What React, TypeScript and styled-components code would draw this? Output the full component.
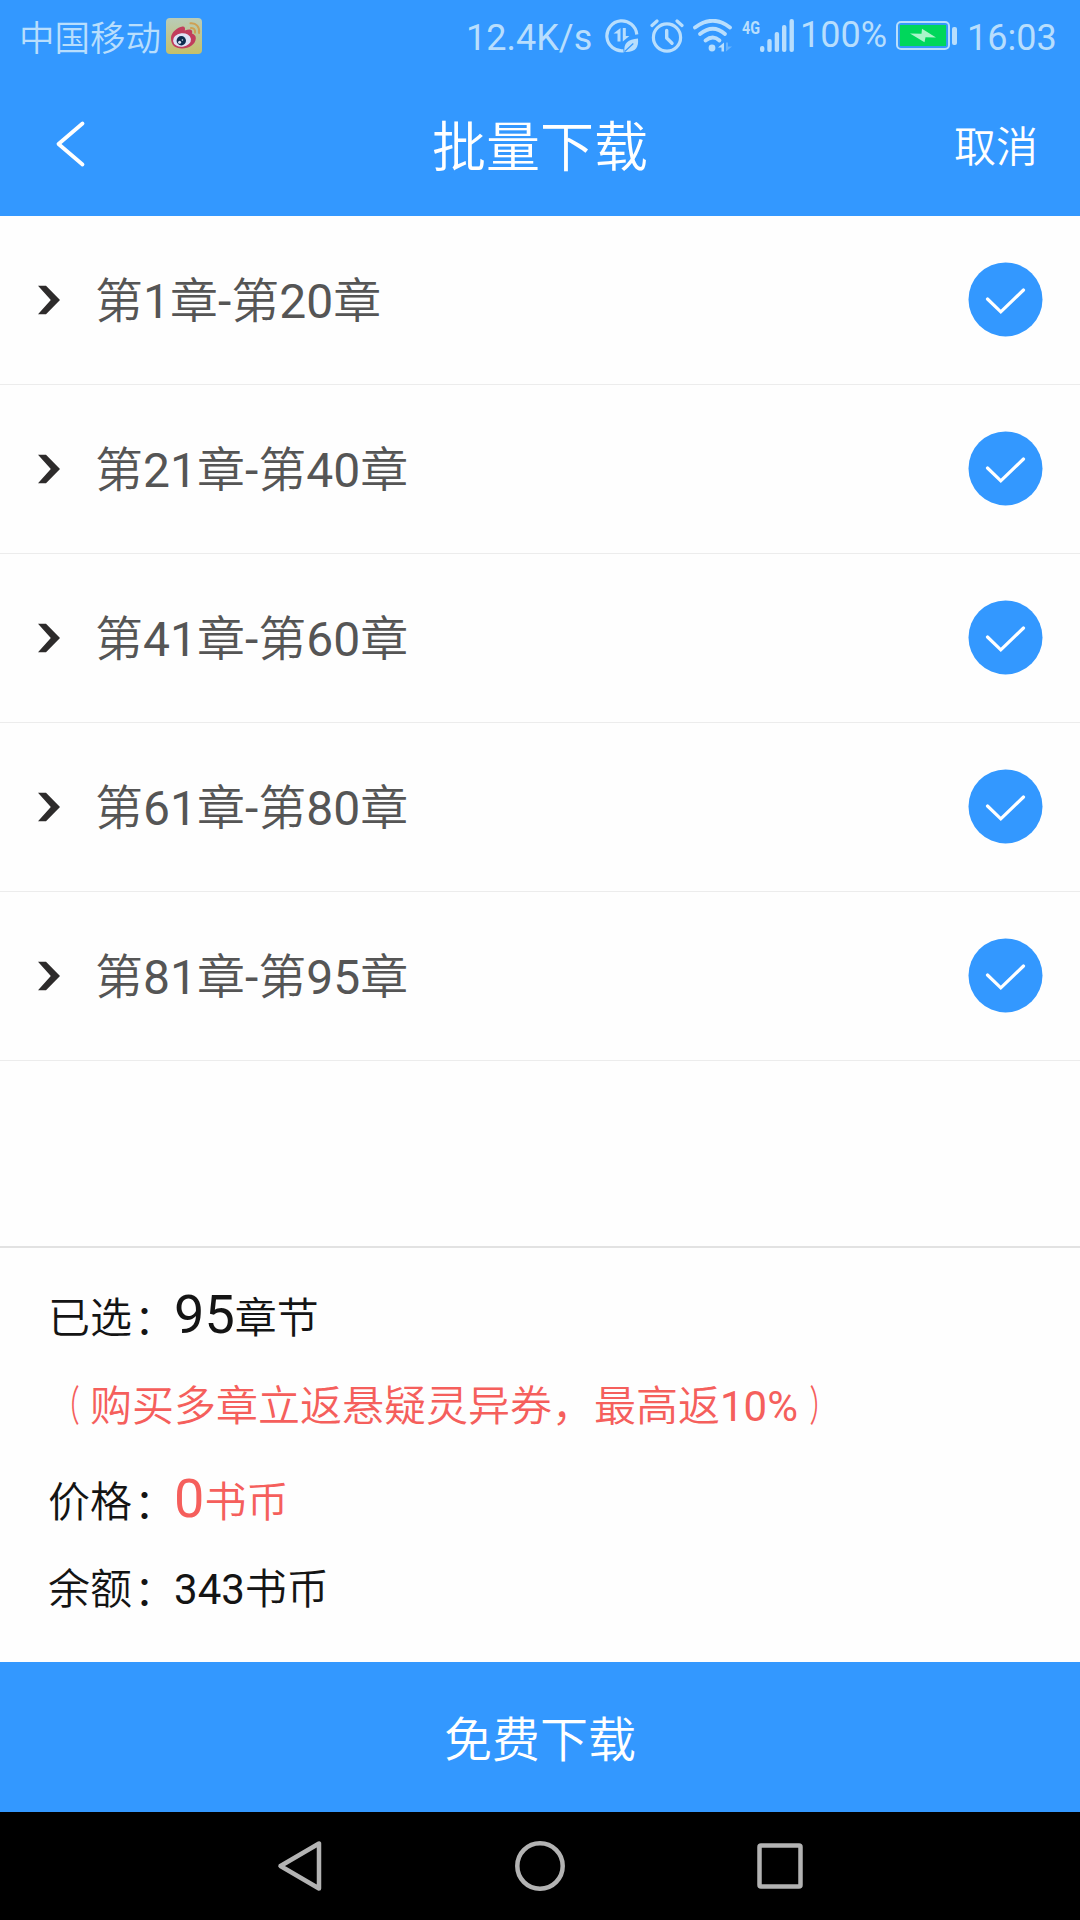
import React, { useState } from 'react';
import styled, { createGlobalStyle } from 'styled-components';

const BLUE = '#3398ff';
const STATUS = '#b8defd';
const RED = '#f55f5c';

const GlobalStyle = createGlobalStyle`
  html, body { margin: 0; padding: 0; background: #fff; }
  * { box-sizing: border-box; }
  button { font: inherit; color: inherit; border: 0; padding: 0; background: none; cursor: pointer; }
  svg { display: block; flex: none; }
`;

const Screen = styled.div`
  width: 1080px;
  height: 1920px;
  display: flex;
  flex-direction: column;
  overflow: hidden;
  background: #fefefe;
  font-family: Roboto, 'Noto Sans CJK SC DemiLight', 'Noto Sans CJK SC', sans-serif;
  font-weight: 400;
`;

const StatusBar = styled.div`
  flex: none;
  height: 72px;
  padding: 0 22px 0 19px;
  display: flex;
  align-items: center;
  justify-content: space-between;
  background: ${BLUE};
  color: ${STATUS};
  font-size: 36px;
  line-height: 72px;
`;

const StatusGroup = styled.div`
  display: flex;
  align-items: center;
  height: 72px;
`;

const StatusIcons = styled(StatusGroup)`
  gap: 9px;

  & > :first-child {
    margin-right: 2px;
  }
`;

const StatusText = styled.span<{ $width: number; $drop?: number; $indent?: number }>`
  width: ${(p) => p.$width}px;
  height: 72px;
  padding-left: ${(p) => p.$indent ?? 0}px;
  margin-top: ${(p) => (p.$drop ?? 0) * 2}px;
  white-space: nowrap;
`;

const Carrier = styled(StatusText)`
  font-size: 35.500px;
  font-weight: 350;
`;

const Header = styled.header`
  flex: none;
  height: 144px;
  display: grid;
  grid-template-columns: 1fr auto 1fr;
  align-items: center;
  background: ${BLUE};
  color: #fff;
`;

const BackButton = styled.button`
  justify-self: start;
  margin-left: 54px;
`;

const Title = styled.h1`
  margin: 0;
  padding-top: 10px;
  font-size: 54px;
  font-weight: 350;
  line-height: 80px;
`;

const Cancel = styled.button`
  && {
    justify-self: end;
    margin-right: 42px;
    padding-top: 8px;
    font-size: 42px;
    font-weight: 350;
    line-height: 60px;
  }
`;

const List = styled.div`
  flex: 1;
`;

const Row = styled.div`
  height: 169px;
  display: flex;
  align-items: center;
  padding: 0 36px 0 37px;
  border-bottom: 1px solid #ececec;
`;

const RowLabel = styled.span`
  flex: 1;
  padding: 4px 0 0 34px;
  font-size: 48px;
  font-weight: 400;
  line-height: 70px;
  color: #555;
`;

const Summary = styled.section`
  flex: none;
  height: 416px;
  padding: 23px 48px 0;
  border-top: 2px solid #e2e2e2;
  font-size: 42px;
  color: #141414;
`;

const Line = styled.div<{ $height: number; $red?: boolean }>`
  height: ${(p) => p.$height}px;
  display: flex;
  align-items: baseline;
  line-height: 88px;
  white-space: pre;
  color: ${(p) => (p.$red ? RED : 'inherit')};
`;

const Amount = styled.span<{ $large?: boolean; $red?: boolean }>`
  font-size: ${(p) => (p.$large ? 54 : 42)}px;
  color: ${(p) => (p.$red ? RED : 'inherit')};
`;

const Unit = styled.span<{ $red?: boolean }>`
  color: ${(p) => (p.$red ? RED : 'inherit')};
`;

const Mark = styled.span<{ $x: number; $y?: number; $squeeze?: number }>`
  display: inline-block;
  transform: translate(${(p) => p.$x}px, ${(p) => p.$y ?? 0}px) scaleX(${(p) => p.$squeeze ?? 1});
`;

const DownloadButton = styled.button`
  && {
    flex: none;
    height: 150px;
    padding-bottom: 3px;
    background: ${BLUE};
    color: #fff;
    font-size: 48px;
    font-weight: 350;
  }
`;

const NavBar = styled.nav`
  flex: none;
  height: 108px;
  display: flex;
  justify-content: center;
  align-items: center;
  gap: 180px;
  background: #000;
`;

const NavButton = styled.button`
  width: 60px;
  height: 60px;
`;

const WeiboIcon = () => (
  <svg width="36" height="36" viewBox="0 0 36 36">
    <defs>
      <linearGradient id="weiboTile" x1="0" y1="0" x2="0" y2="1">
        <stop offset="0" stopColor="#b9ccb8" />
        <stop offset="1" stopColor="#c5c06a" />
      </linearGradient>
    </defs>
    <rect width="36" height="36" rx="4" fill="url(#weiboTile)" />
    <path
      d="M5 20C5 14.500 11.500 9 16.500 8.500c2.300-.2 3 1.700 2.300 4 3-1.200 5.800-1.700 7 0 .7 1 .4 2.300.1 3.100 2.500.8 4.200 2.500 3.900 5.200C29.300 26.500 23 30.500 16 30.500S5 27 5 20z"
      fill="#c13d5c"
    />
    <ellipse cx="16" cy="22" rx="9" ry="6.800" fill="#dfe3f5" transform="rotate(-7 16 22)" />
    <circle cx="15.300" cy="22.800" r="4.700" fill="#0d2c4d" />
    <circle cx="13.600" cy="24.200" r="1.500" fill="#dfe3f5" />
    <circle cx="16.400" cy="22" r=".8" fill="#dfe3f5" />
    <path d="M24.500 5.300c5.500-.6 9.500 3.500 8.500 9.700M25 10c2.800-.2 4.500 1.700 4 4.700" fill="none" stroke="#cfa052" strokeWidth="2" strokeLinecap="round" />
  </svg>
);

const DataSaverIcon = () => (
  <svg width="34" height="34" viewBox="0 0 34 34" fill="none">
    <path d="M31.800 15.500A15 15 0 1 0 18.500 31.800" stroke={STATUS} strokeWidth="3.200" />
    <path d="M15.500 9v13.500h-3v-8H8.500zM17.800 22.500V9h3v8h3.600z" fill={STATUS} />
    <path d="M33 19.500c.8 9-2.200 14-13.500 13.500C18.300 24 23 20.500 33 19.500z" fill={STATUS} />
    <path d="M19.800 32.500l8.500-8" stroke={BLUE} strokeWidth="1.200" />
  </svg>
);

const AlarmIcon = () => (
  <svg width="34" height="34" viewBox="0 0 34 34" fill="none" stroke={STATUS} strokeLinecap="round">
    <circle cx="17" cy="18.500" r="13.600" strokeWidth="3.200" />
    <path d="M16.700 11.500v7.500l5.300 5.200" strokeWidth="3.400" strokeLinejoin="round" />
    <path d="M2 6.500L7 2M27 2l5 4.500" strokeWidth="3.200" />
  </svg>
);

const WifiIcon = () => (
  <svg width="40" height="34" viewBox="0 0 40 34" fill="none">
    <g stroke={STATUS} strokeWidth="3.800" strokeLinecap="round">
      <path d="M2 8.500Q20-5 37 8.500" />
      <path d="M7 15Q20 4.500 32 15" />
      <path d="M12.500 21.500Q20 15.500 26.500 21.500" />
    </g>
    <circle cx="19" cy="29" r="3.400" fill={STATUS} />
    <path d="M31 23.500v9h-2.500v-4H25z" fill={STATUS} />
    <path d="M33 32.500v-9h2v4h4z" fill={STATUS} opacity=".4" />
  </svg>
);

const NetworkLabel = styled.text`
  font-family: Roboto, sans-serif;
  font-size: 19px;
  font-weight: 700;
  fill: ${STATUS};
`;

const SignalIcon = () => (
  <svg width="53" height="36" viewBox="0 0 53 36" overflow="visible">
    <NetworkLabel x="0" y="15.500" textLength="18" lengthAdjust="spacingAndGlyphs">4G</NetworkLabel>
    <g fill={STATUS}>
      <rect x="18" y="28" width="4.400" height="6" rx="2" />
      <rect x="25.300" y="21" width="4.400" height="13" rx="2" />
      <rect x="32.700" y="14" width="4.400" height="20" rx="2" />
      <rect x="40" y="7" width="4.400" height="27" rx="2" />
      <rect x="47.500" y="1" width="4.400" height="33" rx="2" />
    </g>
  </svg>
);

const BatteryIcon = () => (
  <svg width="62" height="30" viewBox="0 0 62 30">
    <rect x="1" y="1" width="52" height="27" rx="4" fill="none" stroke={STATUS} strokeWidth="2" />
    <rect x="3.500" y="3.500" width="47" height="22" rx="2" fill="#3d9ce0" />
    <rect x="4" y="4" width="46" height="21" fill="#00d75b" />
    <path d="M14 12.500l11.500.3.5-5L40 16.500l-10.500-.3-1 5z" fill="#a9f5ca" />
    <rect x="56" y="6" width="5" height="18" rx="2" fill={STATUS} />
  </svg>
);

const BackIcon = () => (
  <svg width="34" height="48" viewBox="0 0 34 48">
    <path d="M28.500 3.500L4.500 24l24 20.500" fill="none" stroke="#fff" strokeWidth="3.800" strokeLinecap="round" strokeLinejoin="round" />
  </svg>
);

const ExpandIcon = () => (
  <svg width="24" height="30" viewBox="0 0 24 30">
    <path d="M1 .8h8L23 15 9 29.200H1L13.800 15z" fill="#2d2b2b" />
  </svg>
);

const CheckIcon = () => (
  <svg width="76" height="76" viewBox="0 0 76 76">
    <circle cx="37.500" cy="37.400" r="37" fill={BLUE} />
    <path d="M19.500 37L32.800 49.800 55.500 28" fill="none" stroke="#fff" strokeWidth="3.200" strokeLinecap="round" />
  </svg>
);

const ranges: [number, number][] = [
  [1, 20],
  [21, 40],
  [41, 60],
  [61, 80],
  [81, 95],
];

export default function App() {
  const [selected, setSelected] = useState<boolean[]>(ranges.map(() => true));
  const total = ranges.reduce((sum, [from, to], i) => sum + (selected[i] ? to - from + 1 : 0), 0);
  const toggle = (index: number) => setSelected((s) => s.map((on, i) => (i === index ? !on : on)));

  const colon = <Mark $x={2} $y={2}>：</Mark>;

  return (
    <>
      <GlobalStyle />
      <Screen>
        <StatusBar>
          <StatusGroup>
            <Carrier $width={147} $drop={3}>中国移动</Carrier>
            <WeiboIcon />
          </StatusGroup>
          <StatusGroup>
            <StatusText $width={139} $drop={2}>12.4K/s</StatusText>
            <StatusIcons>
              <DataSaverIcon />
              <AlarmIcon />
              <WifiIcon />
              <SignalIcon />
            </StatusIcons>
            <StatusText $width={101} $drop={-1} $indent={5}>100%</StatusText>
            <BatteryIcon />
            <StatusText $width={100} $drop={2} $indent={9}>16:03</StatusText>
          </StatusGroup>
        </StatusBar>
        <Header>
          <BackButton aria-label="返回"><BackIcon /></BackButton>
          <Title>批量下载</Title>
          <Cancel>取消</Cancel>
        </Header>
        <List>
          {ranges.map(([from, to], i) => (
            <Row key={from}>
              <ExpandIcon />
              <RowLabel>{`第${from}章-第${to}章`}</RowLabel>
              <button onClick={() => toggle(i)} style={{ opacity: selected[i] ? 1 : 0.3 }}><CheckIcon /></button>
            </Row>
          ))}
        </List>
        <Summary>
          <Line $height={92}>已选{colon}<Amount $large>{total}</Amount><Unit>章节</Unit></Line>
          <Line $height={92} $red>
            <Mark $x={-2} $squeeze={0.6}>（</Mark>购买多章立返悬疑灵异券，最高返10%<Mark $x={3} $squeeze={0.6}>）</Mark>
          </Line>
          <Line $height={91}>价格{colon}<Amount $large $red>0</Amount><Unit $red>书币</Unit></Line>
          <Line $height={88}>余额{colon}<Amount>343</Amount><Unit>书币</Unit></Line>
        </Summary>
        <DownloadButton>免费下载</DownloadButton>
        <NavBar>
          <NavButton aria-label="后退">
            <svg width="60" height="60" viewBox="0 0 60 60">
              <path d="M49 7.500v45L10.500 30z" fill="none" stroke="#b3b3b3" strokeWidth="4.500" strokeLinejoin="round" />
            </svg>
          </NavButton>
          <NavButton aria-label="主页">
            <svg width="60" height="60" viewBox="0 0 60 60">
              <circle cx="30" cy="30" r="22.700" fill="none" stroke="#b3b3b3" strokeWidth="4.500" />
            </svg>
          </NavButton>
          <NavButton aria-label="任务">
            <svg width="60" height="60" viewBox="0 0 60 60">
              <rect x="9.500" y="9.500" width="41" height="41" rx="1.500" fill="none" stroke="#b3b3b3" strokeWidth="4.500" />
            </svg>
          </NavButton>
        </NavBar>
      </Screen>
    </>
  );
}
